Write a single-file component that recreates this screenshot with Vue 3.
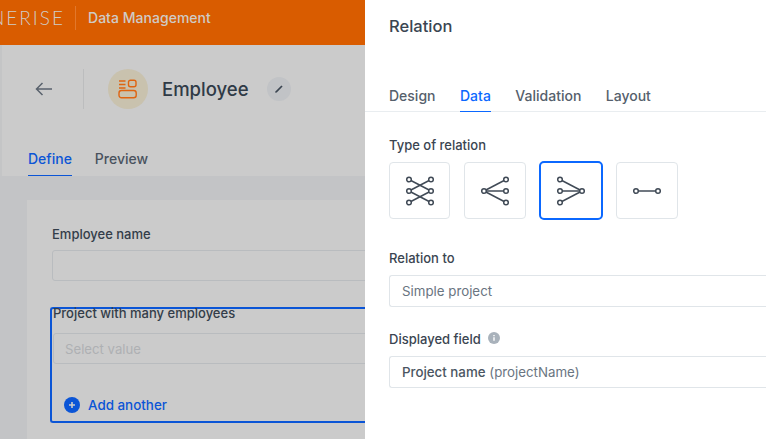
<script setup>
const N = { l: 4, r: 26, t: 3.5, m: 15, b: 26.5 }
const icons = [
  { id: 'mm', w: 61, lines: [[N.l, N.t, N.r, N.m], [N.l, N.m, N.r, N.t], [N.l, N.m, N.r, N.b], [N.l, N.b, N.r, N.m]], nodes: [[N.l, N.t], [N.l, N.m], [N.l, N.b], [N.r, N.t], [N.r, N.m], [N.r, N.b]] },
  { id: 'om', w: 62, lines: [[N.l, N.m, N.r, N.t], [N.l, N.m, N.r, N.m], [N.l, N.m, N.r, N.b]], nodes: [[N.l, N.m], [N.r, N.t], [N.r, N.m], [N.r, N.b]] },
  { id: 'mo', w: 64, active: true, lines: [[N.l, N.t, N.r, N.m], [N.l, N.m, N.r, N.m], [N.l, N.b, N.r, N.m]], nodes: [[N.l, N.t], [N.l, N.m], [N.l, N.b], [N.r, N.m]] },
  { id: 'oo', w: 62, lines: [[N.l, N.m, N.r, N.m]], nodes: [[N.l, N.m], [N.r, N.m]] }
]
</script>

<template>
  <div class="page">
    <section class="left">
      <header class="topbar">
        <span class="logo-clip"><span class="logo">SYNERISE</span></span>
        <span class="top-sep"></span>
        <span class="top-title">Data Management</span>
      </header>
      <div class="head">
        <div class="title-row">
          <svg class="back" width="18" height="14" viewBox="0 0 18 14" fill="none" stroke="#59626d" stroke-width="1.5">
            <path d="M17 7H1.5M7.5 1 1.5 7l6 6" />
          </svg>
          <span class="v-sep"></span>
          <span class="avatar">
            <svg width="20" height="20" viewBox="0 0 20 20" fill="none" stroke="#df6410" stroke-width="1.4">
              <path d="M1 2h6.5M1 5.5h6.5M1 9h6.5" />
              <rect x="10.5" y="1.2" width="7.5" height="6.6" rx="2" />
              <rect x="1" y="11.5" width="17.2" height="7.3" rx="2.5" />
            </svg>
          </span>
          <h1 class="name">Employee</h1>
          <span class="pencil">
            <svg width="10" height="10" viewBox="0 0 10 10" fill="#3b4551">
              <path d="M7.4 1.4 8.6 2.6 2.8 8.4l-1.6.4.4-1.6z" />
            </svg>
          </span>
        </div>
        <nav class="left-tabs">
          <span class="ltab on">Define</span>
          <span class="ltab">Preview</span>
        </nav>
      </div>
      <div class="canvas">
        <div class="form-card">
          <label class="flabel">Employee name</label>
          <div class="finput"></div>
          <div class="selected-box">
            <label class="flabel tight">Project with many employees</label>
            <div class="finput ph">Select value</div>
            <div class="add">
              <svg width="16" height="16" viewBox="0 0 16 16">
                <circle cx="8" cy="8" r="8" fill="#0b55d6" />
                <path d="M8 5v6M5 8h6" stroke="#cbcbcb" stroke-width="1.6" />
              </svg>
              <span>Add another</span>
            </div>
          </div>
        </div>
      </div>
    </section>

    <aside class="panel">
      <h2 class="panel-title">Relation</h2>
      <nav class="tabs">
        <span class="tab">Design</span>
        <span class="tab on">Data</span>
        <span class="tab">Validation</span>
        <span class="tab">Layout</span>
      </nav>
      <div class="panel-body">
        <div class="label">Type of relation</div>
        <div class="types">
          <div v-for="ic in icons" :key="ic.id" class="type" :class="{ active: ic.active }" :style="{ width: ic.w + 'px' }">
            <svg width="30" height="30" viewBox="0 0 30 30" fill="none" stroke="#404a56" stroke-width="1.5">
              <line v-for="(l, i) in ic.lines" :key="i" :x1="l[0]" :y1="l[1]" :x2="l[2]" :y2="l[3]" />
              <circle v-for="(n, i) in ic.nodes" :key="'n' + i" :cx="n[0]" :cy="n[1]" r="2.3" fill="#fff" />
            </svg>
          </div>
        </div>
        <div class="label rel">Relation to</div>
        <div class="input muted">Simple project</div>
        <div class="label disp">
          Displayed field
          <svg class="info" width="12" height="12" viewBox="0 0 12 12">
            <circle cx="6" cy="6" r="6" fill="#a9b2bb" />
            <path d="M6 5.2v3.6M6 3v1.3" stroke="#fff" stroke-width="1.4" />
          </svg>
        </div>
        <div class="input"><b>Project name</b> <span class="muted">(projectName)</span></div>
      </div>
    </aside>
  </div>
</template>

<style>
html, body { margin: 0; overflow: hidden; background: #fff; }
</style>

<style scoped>
.page {
  display: flex;
  width: 766px;
  height: 439px;
  overflow: hidden;
  font-family: Inter, "Liberation Sans", sans-serif;
  color: #3a4551;
}
.left {
  width: 365px;
  flex: none;
  display: flex;
  flex-direction: column;
  overflow: hidden;
  background: #cbcbcb;
}
.topbar {
  height: 45px;
  flex: none;
  box-sizing: border-box;
  padding-bottom: 10px;
  background: #d95c00;
  display: flex;
  align-items: center;
  color: #cfcbc6;
}
.logo-clip {
  width: 75px;
  flex: none;
  display: flex;
  justify-content: flex-end;
  padding-right: 10px;
  box-sizing: border-box;
  overflow: hidden;
}
.logo {
  flex: none;
  font-family: Lato, sans-serif;
  font-size: 19px;
  font-weight: 300;
  letter-spacing: 2px;
  white-space: nowrap;
}
.top-sep { width: 1px; height: 24px; background: #e2782c; flex: none; }
.top-title { margin-left: 12px; font-size: 14px; font-weight: 500; letter-spacing: 0.03px; }
.head {
  height: 131px;
  flex: none;
  box-sizing: border-box;
  border-left: 2px solid #c4c5c6;
  display: flex;
  flex-direction: column;
}
.title-row {
  display: flex;
  align-items: center;
  height: 40px;
  margin-top: 24px;
  padding-left: 33px;
}
.v-sep { width: 1px; height: 40px; background: #bcbdbe; margin-right: 24px; margin-left: 30px; flex: none; }
.back { flex: none; }
.avatar {
  width: 40px;
  height: 40px;
  border-radius: 50%;
  background: #c9c2ae;
  display: flex;
  align-items: center;
  justify-content: center;
  flex: none;
}
.name { margin: 0 0 0 14px; font-size: 18.5px; font-weight: 500; color: #2f3a46; line-height: 1; }
.pencil {
  width: 24px;
  height: 24px;
  border-radius: 50%;
  background: #c1c3c6;
  margin-left: 18px;
  display: flex;
  align-items: center;
  justify-content: center;
}
.left-tabs {
  display: flex;
  gap: 23px;
  padding-left: 26px;
  margin-top: 34px;
}
.ltab { font-size: 14px; font-weight: 500; color: #49525e; padding: 7px 0 7px; line-height: 18px; }
.ltab.on { color: #0b55d6; border-bottom: 1px solid #0b55d6; }
.canvas {
  flex: 1;
  background: #c3c4c6;
  padding: 24px 0 0 27px;
  min-height: 0;
}
.form-card {
  background: #cbcbcb;
  height: 300px;
  box-sizing: border-box;
  padding: 26px 0 0 25px;
  width: 400px;
}
.flabel {
  display: block;
  font-size: 13px;
  font-weight: 500;
  line-height: 17px;
  color: #333d49;
  margin-bottom: 7px;
}
.flabel.tight { margin-bottom: 11px; }
.finput {
  height: 31px;
  box-sizing: border-box;
  border: 1px solid #b9bcbf;
  border-radius: 3px;
  width: 360px;
}
.finput.ph {
  font-size: 13.2px;
  color: #aeb0b3;
  padding-left: 11px;
  line-height: 31px;
}
.selected-box {
  margin-top: 26px;
  margin-left: -2px;
  width: 360px;
  height: 116px;
  box-sizing: border-box;
  border: 2px solid #0b55d6;
  border-right: 0;
  border-radius: 3px 0 0 3px;
  padding-left: 1px;
  position: relative;
}
.selected-box .flabel { margin-top: -4px; }
.add {
  display: flex;
  align-items: center;
  gap: 8px;
  margin-top: 33px;
  margin-left: 11px;
  color: #0b55d6;
  font-size: 13.4px;
  font-weight: 500;
}
.panel {
  width: 401px;
  flex: none;
  background: #fff;
  display: flex;
  flex-direction: column;
}
.panel-title {
  margin: 16px 0 0 24px;
  font-size: 16.5px;
  font-weight: 500;
  line-height: 20px;
  color: #3a4551;
}
.tabs {
  margin-top: 51px;
  padding-left: 24px;
  display: flex;
  gap: 24.5px;
  height: 25px;
  box-sizing: border-box;
  border-bottom: 1px solid #e9edf0;
}
.tab {
  font-size: 14px;
  font-weight: 500;
  color: #55606c;
  line-height: 18px;
  height: 24px;
  box-sizing: border-box;
}
.tab.on { color: #0b68ff; border-bottom: 1px solid #0b68ff; height: 25px; }
.panel-body { padding: 25px 0 0 24px; }
.label { font-size: 13px; font-weight: 500; line-height: 17px; color: #3a4551; display: flex; align-items: center; }
.types { display: flex; gap: 13.5px; margin-top: 7px; align-items: center; }
.type {
  height: 57px;
  box-sizing: border-box;
  border: 1px solid #e0e5e9;
  border-radius: 4px;
  display: flex;
  align-items: center;
  justify-content: center;
}
.type.active { height: 59px; border: 2px solid #0b68ff; border-radius: 5px; margin-right: -1px; }
.rel { margin-top: 30px; }
.input {
  margin-top: 8px;
  height: 32px;
  box-sizing: border-box;
  border: 1px solid #e0e5e9;
  border-right: 0;
  border-radius: 3px 0 0 3px;
  padding-left: 12px;
  font-size: 13.3px;
  line-height: 30px;
  color: #55606c;
}
.input b { font-weight: 500; color: #4a5561; }
.muted { color: #6a7581; font-weight: 400; }
.disp { margin-top: 24px; }
.info { margin-left: 7px; margin-top: -3px; }
</style>
